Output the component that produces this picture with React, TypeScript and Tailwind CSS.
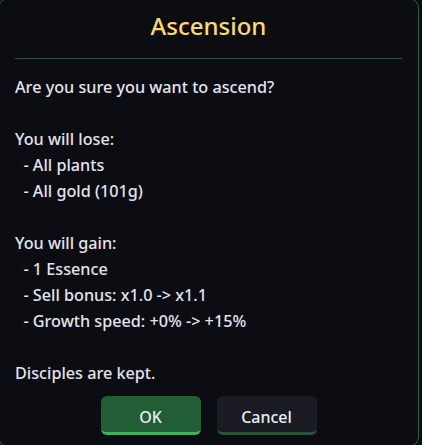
import React from 'react';

const lines = [
  'Are you sure you want to ascend?',
  '',
  'You will lose:',
  '  - All plants',
  '  - All gold (101g)',
  '',
  'You will gain:',
  '  - 1 Essence',
  '  - Sell bonus: x1.0 -> x1.1',
  '  - Growth speed: +0% -> +15%',
  '',
  'Disciples are kept.',
];

export default function App() {
  return (
    <div
      className="h-[445px] w-[422px] overflow-hidden bg-[#0c0d12]"
      style={{ fontFamily: '"Noto Sans", "Open Sans", sans-serif' }}
    >
      <div className="-ml-[2px] -mt-[2px] flex h-[449px] w-[421px] flex-col rounded-[10px] border border-[#2b6339] bg-[#0c0d12] px-[16px] pt-[11px]">
        {/* Title */}
        <h2 className="text-center text-[24px] leading-[32px] font-medium text-[#f8da74]">Ascension</h2>
        <div className="mt-[16px] h-px bg-[#24563a]" />

        {/* Body */}
        <div className="mt-[15px] whitespace-pre-wrap text-[16.2px] leading-[26px] font-medium text-[#e4e4ec]">
          {lines.map((l, i) => (
            <div key={i}>{l || ' '}</div>
          ))}
        </div>

        {/* Buttons */}
        <div className="mt-[10px] flex justify-center gap-4">
          <button className="h-[39px] w-[100px] rounded-md border-b-[3px] border-[#3db15d] bg-[#215d35] pt-[6px] text-[16px] font-medium text-[#ecedf0]">
            OK
          </button>
          <button className="h-[39px] w-[100px] rounded-md border-b-[3px] border-[#29523a] bg-[#1b1c23] pt-[6px] text-[16px] font-medium text-[#ecedf0]">
            Cancel
          </button>
        </div>
      </div>
    </div>
  );
}
